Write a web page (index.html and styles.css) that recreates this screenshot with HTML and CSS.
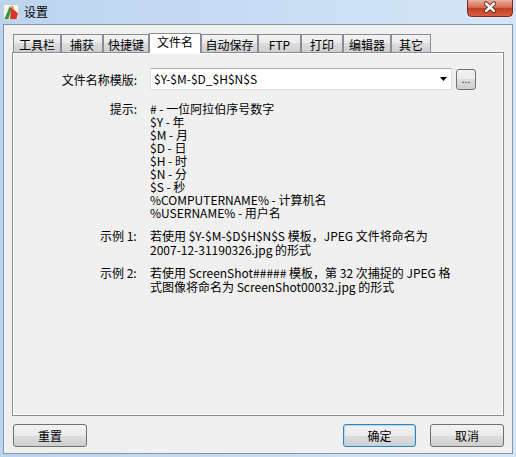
FILE: index.html
```html
<!DOCTYPE html>
<html lang="zh-CN">
<head>
  <meta charset="UTF-8" />
  <title>设置</title>
  <link rel="stylesheet" href="styles.css">
</head>
<body>

  <div class="window">
    <div class="titlebar">
      <svg class="app-icon" viewBox="0 0 16 16">
        <rect x="0.5" y="0.5" width="15" height="15" rx="2" fill="#f6f6f6" stroke="#cfcfcf"/>
        <path d="M1.5 15 L6.5 2.5 L8.5 4.5 L5.5 15 Z" fill="#2e9b3b"/>
        <path d="M8 3 L15 9.5 L13.5 15 L7 15 Z" fill="#d9342b"/>
        <path d="M6.5 2.5 L9.5 1.5 L12 5 L8 3.5 Z" fill="#f1a533"/>
      </svg>
      <span class="title">设置</span>
      <button class="close-btn" type="button">
        <svg width="46" height="17" viewBox="0 0 46 17">
          <defs>
            <linearGradient id="closeGrad" x1="0" y1="0" x2="0" y2="1">
              <stop offset="0" stop-color="#eab0a2"/>
              <stop offset="0.45" stop-color="#d66a53"/>
              <stop offset="0.5" stop-color="#c23d25"/>
              <stop offset="1" stop-color="#d9603f"/>
            </linearGradient>
          </defs>
          <path d="M0.5 0 V12.5 A4 4 0 0 0 4.5 16.5 H41.5 A4 4 0 0 0 45.5 12.5 V0" fill="url(#closeGrad)" stroke="#7c2b1c"/>
          <path d="M19 3.5 L27 11 M27 3.5 L19 11" stroke="#5a2014" stroke-width="4.2" stroke-linecap="round"/>
          <path d="M19 3.5 L27 11 M27 3.5 L19 11" stroke="#ffffff" stroke-width="2.4" stroke-linecap="round"/>
        </svg>
      </button>
    </div>

    <div class="client">
      <div class="tabs">
        <div class="tab tab-toolbar">工具栏</div>
        <div class="tab tab-capture">捕获</div>
        <div class="tab tab-hotkey">快捷键</div>
        <div class="tab tab-filename active">文件名</div>
        <div class="tab tab-autosave">自动保存</div>
        <div class="tab tab-ftp">FTP</div>
        <div class="tab tab-print">打印</div>
        <div class="tab tab-editor">编辑器</div>
        <div class="tab tab-other">其它</div>
      </div>

      <div class="panel">
        <div class="field-row">
          <label class="field-label" for="template">文件名称模版:</label>
          <div class="combo" id="template">
            <span class="combo-text">$Y-$M-$D_$H$N$S</span>
            <svg class="combo-arrow" width="7" height="4" viewBox="0 0 7 4">
              <path d="M0 0 H7 L3.5 4 Z" fill="#000"/>
            </svg>
          </div>
          <button class="browse-btn" type="button">...</button>
        </div>

        <div class="hint-row">
          <div class="hint-label">提示:</div>
          <div class="hint-list">
            <div># - 一位阿拉伯序号数字</div>
            <div>$Y - 年</div>
            <div>$M - 月</div>
            <div>$D - 日</div>
            <div>$H - 时</div>
            <div>$N - 分</div>
            <div>$S - 秒</div>
            <div>%COMPUTERNAME% - 计算机名</div>
            <div>%USERNAME% - 用户名</div>
          </div>
        </div>

        <div class="example-row">
          <div class="example-label">示例 1:</div>
          <div class="example-text">若使用 $Y-$M-$D$H$N$S 模板，JPEG 文件将命名为<br>2007-12-31190326.jpg 的形式</div>
        </div>

        <div class="example-row second">
          <div class="example-label">示例 2:</div>
          <div class="example-text">若使用 ScreenShot##### 模板，第 32 次捕捉的 JPEG 格<br>式图像将命名为 ScreenShot00032.jpg 的形式</div>
        </div>
      </div>

      <div class="footer">
        <button class="btn" type="button">重置</button>
        <button class="btn btn-default" type="button">确定</button>
        <button class="btn btn-cancel" type="button">取消</button>
      </div>
    </div>
  </div>

</body>
</html>
```

FILE: styles.css
```css
* {
  box-sizing: border-box;
}

body {
  margin: 0;
  font-family: "Noto Sans CJK SC", "Liberation Sans", sans-serif;
  font-size: 12px;
  color: #000;
  background: #c6dcf3;
}

.window {
  width: 516px;
  height: 457px;
  background: linear-gradient(to right, #bcd4ef, #d4e6f8);
  display: flex;
  flex-direction: column;
}

/* title bar */
.titlebar {
  position: relative;
  height: 24px;
  padding-left: 3px;
  display: flex;
  align-items: center;
}

.app-icon {
  width: 16px;
  height: 16px;
}

.title {
  margin-left: 5px;
  line-height: 16px;
}

.close-btn {
  position: absolute;
  top: 0;
  right: 3px;
  width: 46px;
  height: 17px;
  padding: 0;
  border: none;
  background: none;
  display: block;
}

.close-btn svg {
  display: block;
}

/* client area */
.client {
  margin: 0 3px;
  height: 430px;
  border: 1px solid #8397ab;
  background: #f0f0f0;
  display: flex;
  flex-direction: column;
}

.tabs {
  position: relative;
  z-index: 1;
  display: flex;
  align-items: flex-end;
  height: 20px;
  margin: 8px 0 -1px 9px;
}

.tab {
  height: 18px;
  margin-bottom: 1px;
  padding-top: 2px;
  border: 1px solid #898c95;
  border-bottom: none;
  background: linear-gradient(#f3f3f3, #ebebeb 45%, #dddddd 50%, #cfcfcf);
  text-align: center;
  line-height: 16px;
  white-space: nowrap;
}

.tab.active {
  height: 20px;
  margin-bottom: 0;
  padding-top: 0;
  background: #fff;
}

.tab-toolbar { width: 48px; }
.tab-capture { width: 42px; }
.tab-hotkey { width: 46px; }
.tab-filename { width: 52px; }
.tab-autosave { width: 57px; }
.tab-ftp { width: 43px; }
.tab-print { width: 42px; }
.tab-editor { width: 48px; }
.tab-other { width: 40px; }

.panel {
  margin: 0 8px;
  height: 364px;
  padding-top: 15px;
  border: 1px solid #898c95;
  background: #f0f0f0;
  box-shadow: inset 0 0 0 1px #fff;
}

/* file name template row */
.field-row {
  display: flex;
  align-items: center;
}

.field-label {
  width: 124px;
  margin-right: 13px;
  text-align: right;
}

.combo {
  width: 302px;
  height: 22px;
  padding: 0 4px 0 3px;
  border: 1px solid #dbdfe6;
  border-top-color: #abadb3;
  background: #fff;
  display: flex;
  align-items: center;
}

.combo-text {
  flex: 1;
  line-height: 20px;
}

.combo-arrow {
  display: block;
}

.browse-btn {
  width: 20px;
  height: 21px;
  margin-left: 4px;
  padding: 0;
  border: 1px solid #707070;
  border-radius: 3px;
  background: linear-gradient(#f2f2f2, #ebebeb 50%, #dddddd 50%, #cfcfcf);
  font-family: "Liberation Sans", sans-serif;
  font-size: 10px;
  line-height: 17px;
  color: #000;
}

/* hints */
.hint-row {
  display: flex;
  margin-top: 12px;
  line-height: 13px;
}

.hint-label {
  width: 124px;
  margin-right: 13px;
  text-align: right;
}

/* examples */
.example-row {
  display: flex;
  margin-top: 10px;
  line-height: 14px;
}

.example-row.second {
  margin-top: 9px;
}

.example-label {
  width: 137px;
  padding-left: 87px;
  white-space: nowrap;
}

/* bottom buttons */
.footer {
  display: flex;
  margin-top: 8px;
  padding: 0 8px 0 9px;
}

.btn {
  width: 74px;
  height: 23px;
  padding: 0;
  border: 1px solid #707070;
  border-radius: 3px;
  background: linear-gradient(#f2f2f2, #ebebeb 50%, #dddddd 50%, #cfcfcf);
  font: inherit;
  line-height: 20px;
  color: #000;
}

.btn-default {
  width: 73px;
  margin-left: auto;
  border-color: #3c7fb1;
  box-shadow: inset 0 0 0 1px #a7dcf5;
}

.btn-cancel {
  margin-left: 14px;
}
```
